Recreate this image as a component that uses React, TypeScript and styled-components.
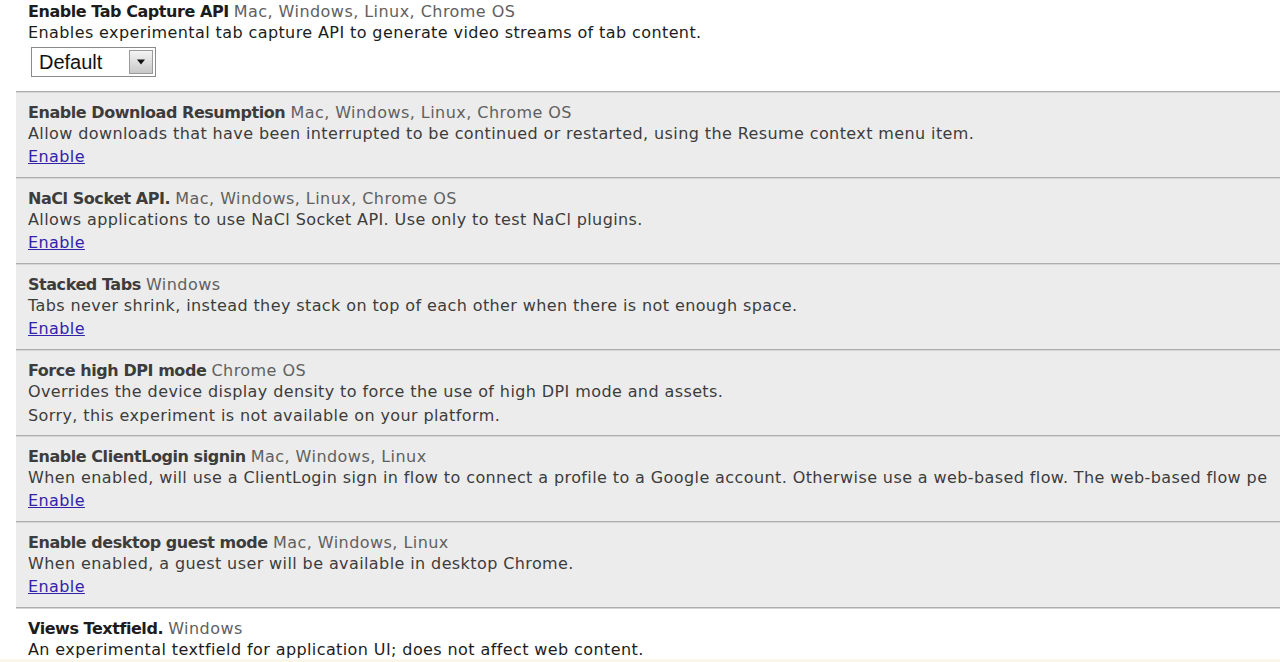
import React from 'react'
import styled, { createGlobalStyle } from 'styled-components'

const GlobalStyle = createGlobalStyle`
  html, body {
    margin: 0;
    padding: 0;
    background: #fff;
  }
  body {
    font-family: "DejaVu Sans", "Liberation Sans", sans-serif;
    overflow: hidden;
  }
`

const Page = styled.div`
  position: relative;
  width: 1280px;
  height: 662px;
  overflow: hidden;
  padding-left: 16px;
  box-sizing: border-box;
  background: #fff;
`

const BottomTint = styled.div`
  position: absolute;
  left: 0;
  right: 0;
  bottom: 0;
  height: 3px;
  background: #fbf6ea;
`

const Experiment = styled.div<{ $shaded?: boolean; $first?: boolean }>`
  background: ${p => (p.$shaded ? '#ececec' : '#fff')};
  padding: ${p => (p.$first ? '1px 0 0 12px' : '10px 0 9px 12px')};
  border-top: ${p => (p.$first ? 'none' : '1px solid #adadad')};
  box-shadow: ${p => (p.$first ? 'none' : 'inset 0 1px 0 #d6d6d6')};
  color: ${p => (p.$shaded ? '#3c3c3c' : '#1c1c1c')};
  font-size: 16px;
  line-height: 21px;
  letter-spacing: 0.4px;
  white-space: nowrap;
`

const Title = styled.div`
  font-weight: bold;
  letter-spacing: -0.45px;
`

const Platforms = styled.span`
  font-weight: normal;
  letter-spacing: 0.45px;
  color: #606060;
`

const Desc = styled.div``

const Note = styled.div`
  margin-top: 3px;
`

const EnableLink = styled.a`
  display: inline-block;
  margin-top: 2px;
  color: #3322aa;
  text-decoration: underline;
  line-height: 22px;
  cursor: pointer;
`

const SelectBox = styled.div`
  display: flex;
  align-items: stretch;
  margin: 4px 0 14px 3px;
  width: 125px;
  height: 30px;
  box-sizing: border-box;
  border: 1px solid #8a8a8a;
  background: #fff;
  letter-spacing: 0;
`

const SelectLabel = styled.span`
  flex: 1;
  padding-left: 7px;
  font-family: "Liberation Sans", Arial, sans-serif;
  font-size: 20px;
  line-height: 28px;
  color: #111;
`

const SelectButton = styled.span`
  width: 24px;
  margin: 2px 2px 2px 0;
  display: flex;
  align-items: center;
  justify-content: center;
  background: linear-gradient(#f4f4f4, #c8c8c8);
  border: 1px solid #9a9a9a;
  box-sizing: border-box;
`

type Item = {
  title: string
  platforms: string
  desc: string
  note?: string
  enable?: boolean
}

const items: Item[] = [
  {
    title: 'Enable Download Resumption',
    platforms: 'Mac, Windows, Linux, Chrome OS',
    desc: 'Allow downloads that have been interrupted to be continued or restarted, using the Resume context menu item.',
    enable: true,
  },
  {
    title: 'NaCl Socket API.',
    platforms: 'Mac, Windows, Linux, Chrome OS',
    desc: 'Allows applications to use NaCl Socket API. Use only to test NaCl plugins.',
    enable: true,
  },
  {
    title: 'Stacked Tabs',
    platforms: 'Windows',
    desc: 'Tabs never shrink, instead they stack on top of each other when there is not enough space.',
    enable: true,
  },
  {
    title: 'Force high DPI mode',
    platforms: 'Chrome OS',
    desc: 'Overrides the device display density to force the use of high DPI mode and assets.',
    note: 'Sorry, this experiment is not available on your platform.',
  },
  {
    title: 'Enable ClientLogin signin',
    platforms: 'Mac, Windows, Linux',
    desc: 'When enabled, will use a ClientLogin sign in flow to connect a profile to a Google account. Otherwise use a web-based flow. The web-based flow pe',
    enable: true,
  },
  {
    title: 'Enable desktop guest mode',
    platforms: 'Mac, Windows, Linux',
    desc: 'When enabled, a guest user will be available in desktop Chrome.',
    enable: true,
  },
]

function Arrow() {
  return (
    <svg width="10" height="6" viewBox="0 0 10 6">
      <path d="M1 0.5 L9 0.5 L5 5.5 Z" fill="#111" />
    </svg>
  )
}

export default function App() {
  return (
    <>
      <GlobalStyle />
      <Page>
        <Experiment $first>
          <Title>
            Enable Tab Capture API <Platforms>Mac, Windows, Linux, Chrome OS</Platforms>
          </Title>
          <Desc>Enables experimental tab capture API to generate video streams of tab content.</Desc>
          <SelectBox>
            <SelectLabel>Default</SelectLabel>
            <SelectButton>
              <Arrow />
            </SelectButton>
          </SelectBox>
        </Experiment>

        {items.map(item => (
          <Experiment $shaded key={item.title}>
            <Title>
              {item.title} <Platforms>{item.platforms}</Platforms>
            </Title>
            <Desc>{item.desc}</Desc>
            {item.note && <Note>{item.note}</Note>}
            {item.enable && <EnableLink>Enable</EnableLink>}
          </Experiment>
        ))}

        <Experiment>
          <Title>
            Views Textfield. <Platforms>Windows</Platforms>
          </Title>
          <Desc>An experimental textfield for application UI; does not affect web content.</Desc>
        </Experiment>
        <BottomTint />
      </Page>
    </>
  )
}
